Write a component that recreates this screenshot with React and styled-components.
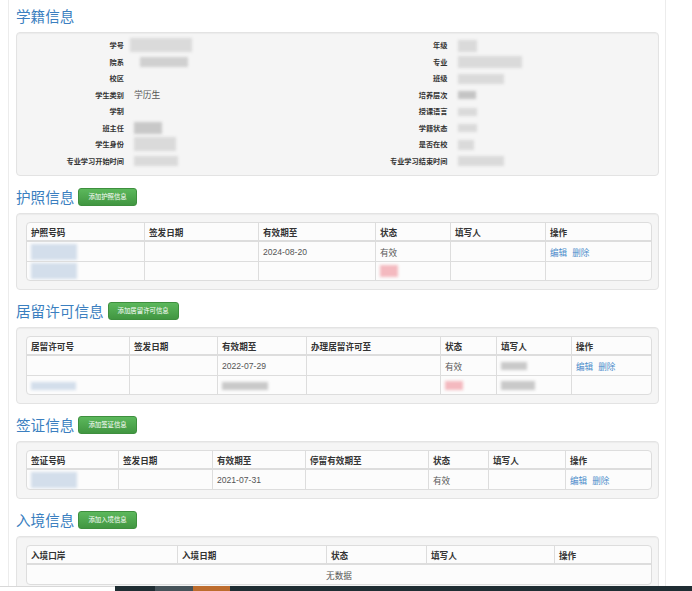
import React from 'react'
import styled, { createGlobalStyle } from 'styled-components'

const GlobalStyle = createGlobalStyle`
  *, *::before, *::after { box-sizing: border-box; }
  html, body { margin: 0; padding: 0; background: #fff; }
  body {
    font-family: "Liberation Sans", "Noto Sans CJK SC", sans-serif;
    color: #333;
  }
`

const Page = styled.div`
  margin-left: 8px;
  width: 658px;
  min-height: 100vh;
  padding: 6px 6px 0 7px;
  border-left: 1px solid #ececec;
  border-right: 1px solid #ececec;
`

const Section = styled.section`
  margin-bottom: 11px;
`

const TitleRow = styled.div`
  display: flex;
  align-items: center;
  gap: 4px;
  height: 20px;
  margin-bottom: 6px;
`

const Title = styled.h3`
  margin: 0;
  font-family: "Noto Sans CJK SC", sans-serif;
  font-size: 14.6px;
  font-weight: 400;
  line-height: 20px;
  color: #3b7fc0;
`

const AddButton = styled.button`
  height: 18px;
  padding: 0 9px;
  border: 1px solid #3e8f3e;
  border-radius: 3px;
  background: linear-gradient(#5cb85c, #419641);
  color: #fff;
  font-family: "Noto Sans CJK SC", sans-serif;
  font-size: 6.4px;
  line-height: 16px;
  cursor: pointer;
`

const Well = styled.div`
  background: #f5f5f5;
  border: 1px solid #e3e3e3;
  border-radius: 4px;
  box-shadow: inset 0 1px 1px rgba(0, 0, 0, 0.04);
  padding: ${p => (p.$dl ? '4px 0 6px' : '8px 9px 8px')};
`

const InfoGrid = styled.div`
  display: grid;
  grid-template-columns: 1fr 1fr;
`

const InfoColumn = styled.dl`
  margin: 0;
`

const InfoRow = styled.div`
  display: grid;
  grid-template-columns: ${p => p.$lw}px 1fr;
  column-gap: 10px;
  align-items: center;
  height: 16.5px;
`

const Label = styled.dt`
  text-align: right;
  font-family: "Noto Sans CJK SC", sans-serif;
  font-size: 7.2px;
  font-weight: 700;
  color: #333;
  white-space: nowrap;
`

const Value = styled.dd`
  margin: 0;
  font-family: "Noto Sans CJK SC", sans-serif;
  font-size: 8.8px;
  color: #555;
  line-height: 12px;
`

const Smudge = styled.span`
  display: inline-block;
  vertical-align: middle;
  width: ${p => p.$w}px;
  height: ${p => p.$h || 10}px;
  margin-left: ${p => p.$ml || 0}px;
  background: ${p => p.$c || '#dadada'};
  filter: blur(1.4px);
`

const Table = styled.table`
  width: 100%;
  table-layout: fixed;
  border-collapse: separate;
  border-spacing: 0;
  background: #fcfcfc;
  border: 1px solid #dddddd;
  border-radius: 4px;
  font-family: "Liberation Sans", "Noto Sans CJK SC", sans-serif;
`

const Col = styled.col`
  width: ${p => p.$w}px;
`

const Th = styled.th`
  height: 19px;
  padding: 0 4px;
  text-align: left;
  font-family: "Noto Sans CJK SC", sans-serif;
  font-size: 8.6px;
  font-weight: 700;
  color: #333;
  border-bottom: 2px solid #dddddd;
  & + & { border-left: 1px solid #dddddd; }
`

const Td = styled.td`
  height: 19px;
  padding: 0 4px;
  font-size: 8.6px;
  color: #555;
  white-space: nowrap;
  overflow: hidden;
  text-align: ${p => (p.$center ? 'center' : 'left')};
  tr + tr > & { border-top: 1px solid #dddddd; }
  & + & { border-left: 1px solid #dddddd; }
`

const Link = styled.a`
  color: #4a8ccb;
  text-decoration: none;
  margin-right: 5px;
  font-family: "Noto Sans CJK SC", sans-serif;
`

const Taskbar = styled.div`
  position: fixed;
  left: 0;
  right: 0;
  bottom: 0;
  height: 5px;
  display: flex;
`

const BarPart = styled.div`
  width: ${p => (p.$w ? `${p.$w}px` : 'auto')};
  flex: ${p => (p.$w ? 'none' : '1')};
  background: ${p => p.$c};
  border-top: 1px solid ${p => p.$top || p.$c};
`

const actions = (
  <>
    <Link href="#">编辑</Link>
    <Link href="#">删除</Link>
  </>
)

const blue = '#d3deeb'
const pink = '#f4b9bf'
const gray = '#c9c9c9'

const leftInfo = [
  ['学号', <Smudge $w={62} $h={14} $ml={-4} />],
  ['院系', <Smudge $w={48} $h={10} $c="#d0d0d0" $ml={6} />],
  ['校区', null],
  ['学生类别', '学历生'],
  ['学制', null],
  ['班主任', <Smudge $w={28} $h={12} $c="#c8c8c8" />],
  ['学生身份', <Smudge $w={42} $h={14} />],
  ['专业学习开始时间', <Smudge $w={44} $h={10} />],
]

const rightInfo = [
  ['年级', <Smudge $w={19} $h={12} />],
  ['专业', <Smudge $w={64} $h={12} />],
  ['班级', <Smudge $w={46} $h={10} />],
  ['培养层次', <Smudge $w={18} $h={8} $c="#c4c4c4" />],
  ['授课语言', <Smudge $w={19} $h={8} />],
  ['学籍状态', <Smudge $w={19} $h={8} />],
  ['是否在校', <Smudge $w={16} $h={10} />],
  ['专业学习结束时间', <Smudge $w={46} $h={10} />],
]

const tables = [
  {
    title: '护照信息',
    button: '添加护照信息',
    cols: [
      ['护照号码', 117], ['签发日期', 114], ['有效期至', 117],
      ['状态', 75], ['填写人', 95], ['操作', 106],
    ],
    rows: [
      [<Smudge $w={46} $h={16} $c={blue} />, '', '2024-08-20', '有效', '', actions],
      [<Smudge $w={46} $h={16} $c={blue} />, '', '', <Smudge $w={18} $h={12} $c={pink} />, '', ''],
    ],
  },
  {
    title: '居留许可信息',
    button: '添加居留许可信息',
    cols: [
      ['居留许可号', 102], ['签发日期', 88], ['有效期至', 89], ['办理居留许可至', 134],
      ['状态', 56], ['填写人', 75], ['操作', 80],
    ],
    rows: [
      ['', '', '2022-07-29', '', '有效', <Smudge $w={26} $h={8} $c={gray} />, actions],
      [<Smudge $w={45} $h={8} $c={blue} />, '', <Smudge $w={46} $h={8} $c={gray} />, '',
        <Smudge $w={18} $h={9} $c={pink} />, <Smudge $w={34} $h={9} $c={gray} />, ''],
    ],
  },
  {
    title: '签证信息',
    button: '添加签证信息',
    cols: [
      ['签证号码', 91], ['签发日期', 94], ['有效期至', 93], ['停留有效期至', 123],
      ['状态', 60], ['填写人', 77], ['操作', 86],
    ],
    rows: [
      [<Smudge $w={46} $h={16} $c={blue} />, '', '2021-07-31', '', '有效', '', actions],
    ],
  },
  {
    title: '入境信息',
    button: '添加入境信息',
    cols: [
      ['入境口岸', 150], ['入境日期', 149], ['状态', 100], ['填写人', 128], ['操作', 97],
    ],
    rows: [],
  },
]

const InfoList = ({ items, labelWidth }) => (
  <InfoColumn>
    {items.map(([label, value]) => (
      <InfoRow key={label} $lw={labelWidth}>
        <Label>{label}</Label>
        <Value>{value}</Value>
      </InfoRow>
    ))}
  </InfoColumn>
)

const DataTable = ({ cols, rows }) => (
  <Table>
    <colgroup>
      {cols.map(([name, w]) => <Col key={name} $w={w} />)}
    </colgroup>
    <thead>
      <tr>
        {cols.map(([name]) => <Th key={name}>{name}</Th>)}
      </tr>
    </thead>
    <tbody>
      {rows.length === 0 ? (
        <tr>
          <Td colSpan={cols.length} $center>无数据</Td>
        </tr>
      ) : (
        rows.map((row, i) => (
          <tr key={i}>
            {row.map((cell, j) => <Td key={j}>{cell}</Td>)}
          </tr>
        ))
      )}
    </tbody>
  </Table>
)

const App = () => {
  return (
    <>
      <GlobalStyle />
      <Page>
        <Section>
          <TitleRow>
            <Title>学籍信息</Title>
          </TitleRow>
          <Well $dl>
            <InfoGrid>
              <InfoList items={leftInfo} labelWidth={107} />
              <InfoList items={rightInfo} labelWidth={110} />
            </InfoGrid>
          </Well>
        </Section>
        {tables.map(t => (
          <Section key={t.title}>
            <TitleRow>
              <Title>{t.title}</Title>
              <AddButton>{t.button}</AddButton>
            </TitleRow>
            <Well>
              <DataTable cols={t.cols} rows={t.rows} />
            </Well>
          </Section>
        ))}
      </Page>
      <Taskbar>
        <BarPart $w={115} $c="#ffffff" $top="#d8d8d8" />
        <BarPart $w={40} $c="#1f2d33" />
        <BarPart $w={38} $c="#46535a" />
        <BarPart $w={37} $c="#bd6d2e" />
        <BarPart $c="#1f2d33" />
      </Taskbar>
    </>
  )
}

export default App
